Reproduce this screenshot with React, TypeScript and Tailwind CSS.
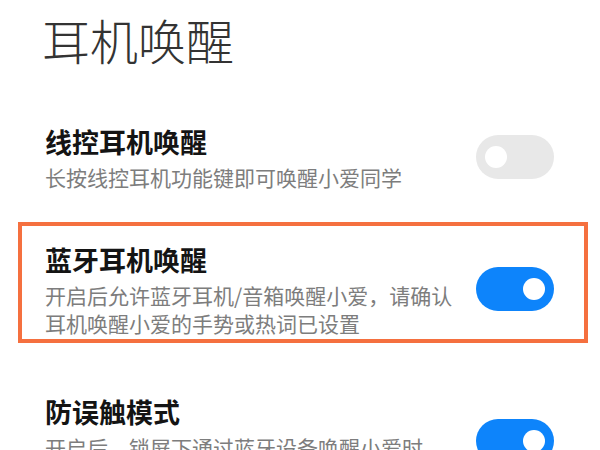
import React from "react";

const font = { fontFamily: '"Noto Sans CJK SC", "Noto Sans", sans-serif' };

function Toggle({ on }: { on: boolean }) {
  return (
    <div
      className={
        "w-[78px] h-[44px] rounded-full flex items-center px-[9px] shrink-0 " +
        (on ? "bg-[#0d84fb] justify-end" : "bg-[#e8e8e8] justify-start")
      }
    >
      <div className="w-[22px] h-[22px] rounded-full bg-white" />
    </div>
  );
}

function Row({
  title,
  lines,
  on,
  className,
}: {
  title: string;
  lines: string[];
  on: boolean;
  className: string;
}) {
  return (
    <div className={"flex items-center justify-between " + className}>
      <div className="flex flex-col">
        <div className="text-[27px] leading-[40px] font-bold text-[#141414]">{title}</div>
        <div className="mt-[1px] text-[21px] leading-[28px] text-[#7d7d7d]">
          {lines.map((l, i) => (
            <div key={i} className="whitespace-nowrap">
              {l}
            </div>
          ))}
        </div>
      </div>
      <Toggle on={on} />
    </div>
  );
}

export default function App() {
  return (
    <div className="w-[600px] h-[450px] bg-white overflow-hidden" style={font}>
      <div className="pt-[15px] pl-[42px] text-[48px] leading-[48px] font-light text-[#333333]">
        耳机唤醒
      </div>
      <Row
        className="mt-[59px] pl-[45px] pr-[46px]"
        title="线控耳机唤醒"
        lines={["长按线控耳机功能键即可唤醒小爱同学"]}
        on={false}
      />
      <div className="mt-[31px] ml-[18px] mr-[12px] border-4 border-[#f5703f] pt-[14px] pb-[2px]">
        <Row
          className="pl-[23px] pr-[30px]"
          title="蓝牙耳机唤醒"
          lines={["开启后允许蓝牙耳机/音箱唤醒小爱，请确认", "耳机唤醒小爱的手势或热词已设置"]}
          on={true}
        />
      </div>
      <Row
        className="mt-[49px] pl-[45px] pr-[46px]"
        title="防误触模式"
        lines={["开启后，锁屏下通过蓝牙设备唤醒小爱时", "需要先解锁手机"]}
        on={true}
      />
    </div>
  );
}
